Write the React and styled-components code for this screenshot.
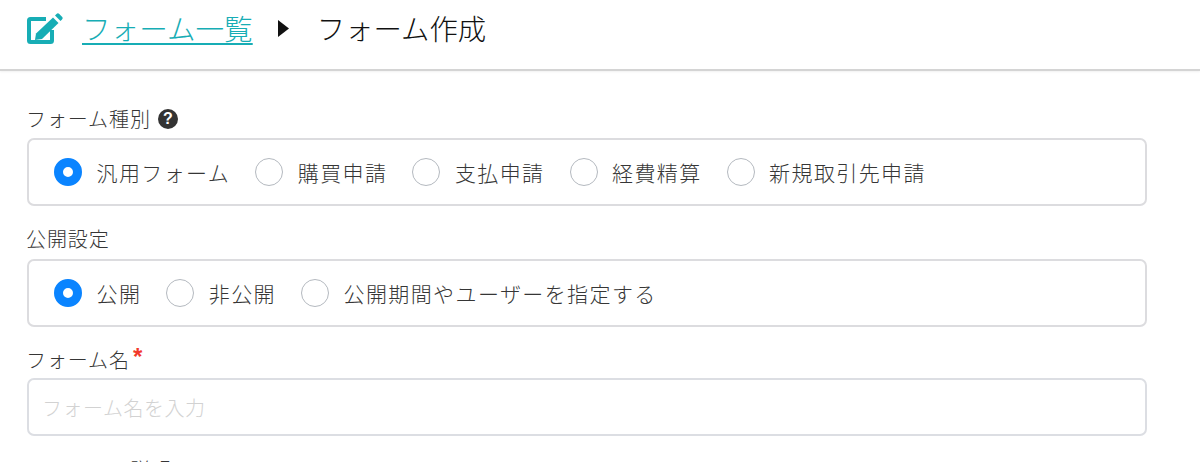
import React from "react";
import styled, { createGlobalStyle } from "styled-components";

const GlobalStyle = createGlobalStyle`
  html, body {
    margin: 0;
    padding: 0;
    height: 462px;
    overflow: hidden;
    background: #fff;
    font-family: "Noto Sans CJK JP", "Noto Sans", sans-serif;
    color: #363636;
  }
`;

const Header = styled.header`
  display: flex;
  align-items: center;
  height: 71px;
  padding: 0 0 13px 26px;
  box-sizing: border-box;
  border-bottom: 2px solid #d4d4d4;
  box-shadow: 0 1px 2px rgba(0, 0, 0, 0.06);
  font-weight: 300;
  line-height: 40px;
`;

const EditIcon = styled.svg`
  width: 37px;
  height: 32px;
  flex: none;
  margin: 2px 19px 0 0;
`;

const HeaderLink = styled.a`
  color: #17adb5;
  text-decoration: underline;
  text-underline-offset: 3px;
  text-decoration-thickness: 2px;
  font-size: 28.6px;
`;

const Arrow = styled.svg`
  width: 11px;
  height: 17px;
  flex: none;
  margin: 0 28px 0 25px;
`;

const Title = styled.span`
  color: #111;
  font-size: 28.4px;
`;

const Main = styled.main`
  padding: 34px 53px 0 27px;
`;

const Label = styled.div`
  display: flex;
  align-items: center;
  height: 28px;
  margin-left: -1px;
  font-size: 20px;
  font-weight: 300;
  letter-spacing: 0.9px;
  line-height: 28px;
`;

const Help = styled.span`
  display: inline-flex;
  align-items: center;
  justify-content: center;
  width: 20px;
  height: 20px;
  margin-left: 7px;
  border-radius: 50%;
  background: #333;
  color: #fff;
  font-size: 16px;
  font-weight: 700;
  letter-spacing: 0;
  font-family: "Liberation Sans", sans-serif;
`;

const Required = styled.span`
  align-self: flex-start;
  margin-left: 3px;
  color: #f2392c;
  font-size: 24px;
  font-weight: 700;
  line-height: 22px;
  font-family: "Liberation Sans", sans-serif;
`;

const RadioBox = styled.div`
  display: flex;
  align-items: center;
  height: 68px;
  box-sizing: border-box;
  margin: ${props => (props.first ? "5px" : "6px")} 0 19px;
  padding: 0 25px;
  gap: 25px;
  border: 2px solid #dcdcdf;
  border-radius: 7px;
`;

const RadioItem = styled.label`
  display: flex;
  align-items: center;
  font-size: 21px;
  font-weight: 300;
  letter-spacing: 1.4px;
`;

const RadioMark = styled.span`
  display: block;
  flex: none;
  box-sizing: border-box;
  width: 28px;
  height: 28px;
  margin-right: 14.5px;
  border-radius: 50%;
  background: #fff;
  border: ${props => (props.checked ? "9px solid #0a84ff" : "1.5px solid #b4b9bf")};
`;

const TextBox = styled.div`
  display: flex;
  align-items: center;
  height: 58px;
  box-sizing: border-box;
  margin: 4px 0 20px;
  padding: 0 13px;
  border: 2px solid #dcdee3;
  border-radius: 7px;
  color: #d2d2d2;
  font-size: 20px;
  font-weight: 300;
  letter-spacing: 0.5px;
`;

const Radio = ({ checked, children }) => (
  <RadioItem>
    <RadioMark checked={checked} />
    {children}
  </RadioItem>
);

export default function App() {
  return (
    <>
      <GlobalStyle />
      <Header>
        <EditIcon viewBox="0 0 37 32">
          <path d="M20 6H4.500A1.500 1.500 0 0 0 3 7.500V27.500A1.500 1.500 0 0 0 4.500 29H24.500A1.500 1.500 0 0 0 26 27.500V17" fill="none" stroke="#17adb5" strokeWidth="4" />
          <path d="M27 4.500 32.500 10 16 26 9 27 10 20.500z" fill="#17adb5" />
          <path d="M29 2.500l1.500-1.500a2 2 0 0 1 2.800 0l2.700 2.700a2 2 0 0 1 0 2.800L34.500 8z" fill="#17adb5" />
        </EditIcon>
        <HeaderLink>フォーム一覧</HeaderLink>
        <Arrow viewBox="0 0 11 17">
          <path d="M0 0l11 8.500L0 17z" fill="#111" />
        </Arrow>
        <Title>フォーム作成</Title>
      </Header>
      <Main>
        <Label>
          フォーム種別<Help>?</Help>
        </Label>
        <RadioBox first>
          <Radio checked>汎用フォーム</Radio>
          <Radio>購買申請</Radio>
          <Radio>支払申請</Radio>
          <Radio>経費精算</Radio>
          <Radio>新規取引先申請</Radio>
        </RadioBox>
        <Label>公開設定</Label>
        <RadioBox>
          <Radio checked>公開</Radio>
          <Radio>非公開</Radio>
          <Radio>公開期間やユーザーを指定する</Radio>
        </RadioBox>
        <Label>
          フォーム名<Required>*</Required>
        </Label>
        <TextBox>フォーム名を入力</TextBox>
        <Label>フォームの説明</Label>
      </Main>
    </>
  );
}
